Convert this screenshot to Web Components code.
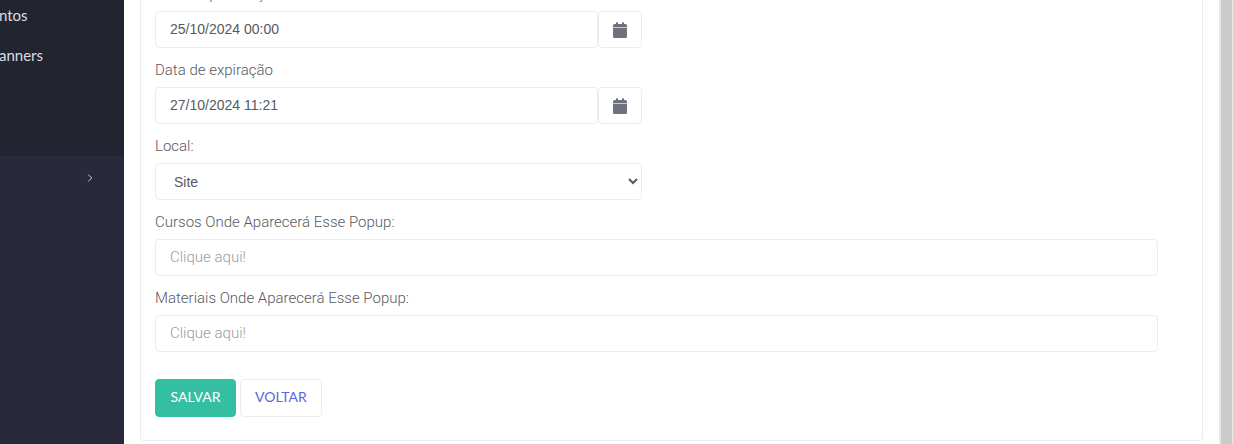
<!DOCTYPE html>
<html lang="pt-BR">
<head>
<meta charset="utf-8">
<title>Popup</title>
<style>
    body {
        margin: 0;
        background: #fff;
        color: #575962;
        font: 14px/20px "Liberation Sans", Arial, sans-serif;
        --line: #ebedf2;
        --light: Roboto, "Liberation Sans", sans-serif;
        --title: Lato, "Open Sans", sans-serif;
    }
</style>
</head>
<body>
<popup-page>
    <side-menu slot="menu">
        <menu-link>ntos</menu-link>
        <menu-link>anners</menu-link>
    </side-menu>
    <popup-form></popup-form>
</popup-page>
<script>
class PopupPage extends HTMLElement {
    constructor() {
        super();
        this.attachShadow({ mode: 'open' });
        this.shadowRoot.innerHTML = `
            <style>
                :host {
                    display: flex;
                    height: 100vh;
                    overflow: hidden;
                }
                main {
                    flex: 1;
                    min-width: 0;
                    padding: 0 16px;
                }
                .track {
                    flex: none;
                    width: 11px;
                    background: #cbcbcb;
                    border-left: 2px solid #e9e9e9;
                    border-right: 1px solid #e9e9e9;
                }
            </style>
            <slot name="menu"></slot>
            <main><slot></slot></main>
            <div class="track"></div>
        `;
    }
}

class SideMenu extends HTMLElement {
    constructor() {
        super();
        this.attachShadow({ mode: 'open' });
        this.shadowRoot.innerHTML = `
            <style>
                :host {
                    display: flex;
                    flex-direction: column;
                    flex: none;
                    width: 124px;
                    background: #282a3c;
                    overflow: hidden;
                }
                nav {
                    padding: 0 0 76px;
                    background: #222430;
                }
                .group {
                    display: flex;
                    justify-content: flex-end;
                    align-items: center;
                    height: 44px;
                    padding: 0 31px;
                    border: 0;
                    background: none;
                    color: #d0d1da;
                }
                .group svg {
                    display: block;
                }
            </style>
            <nav><slot></slot></nav>
            <button class="group" type="button" aria-label="Expandir">
                <svg width="6" height="8" viewBox="0 0 6 8" fill="none" stroke="currentColor"><path d="M1.2.5 4.7 4 1.2 7.5"/></svg>
            </button>
        `;
    }
}

class MenuLink extends HTMLElement {
    constructor() {
        super();
        this.attachShadow({ mode: 'open' });
        this.shadowRoot.innerHTML = `
            <style>
                :host {
                    display: block;
                }
                a {
                    display: block;
                    margin-left: -1px;
                    padding: 5px 0 15px;
                    color: #dddde3;
                    font: 15px/20px var(--title);
                    text-decoration: none;
                }
            </style>
            <a href="#"><slot></slot></a>
        `;
    }
}

// label + control; type is date, select or text
class FormField extends HTMLElement {
    connectedCallback() {
        const type = this.getAttribute('type');
        const value = this.getAttribute('value') || '';
        let control = `<input id="control" type="text" placeholder="Clique aqui!">`;
        if (type === 'date') {
            control = `
                <input id="control" type="text" value="${value}">
                <button type="button" aria-label="Abrir calendário">
                    <svg width="14" height="16" viewBox="0 0 14 16"><g fill="#6f727d"><path d="M3 .8Q3 .3 3.5.3h1q.5 0 .5.5V2h4V.8Q9 .3 9.5.3h1q.5 0 .5.5V2h1.5Q14 2 14 3.5V5H0V3.5Q0 2 1.5 2H3z"/><path d="M0 6h14v8.5Q14 16 12.5 16h-11Q0 16 0 14.5z"/></g><path d="M0 5h14v1H0z" fill="#c9cace"/></svg>
                </button>`;
        }
        if (type === 'select') {
            control = `<select id="control"><option>${value}</option></select>`;
        }
        this.attachShadow({ mode: 'open' });
        this.shadowRoot.innerHTML = `
            <style>
                :host {
                    display: block;
                }
                label {
                    display: block;
                    margin-bottom: 7px;
                    font: 300 15px/20px var(--light);
                }
                .row {
                    display: flex;
                    height: 37px;
                }
                input, select, button {
                    box-sizing: border-box;
                    border: 1px solid var(--line);
                    border-radius: 4px;
                    background: #fff;
                    color: #575962;
                    font: inherit;
                }
                input, select {
                    flex: 1;
                    min-width: 0;
                    padding: 0 14px;
                }
                input {
                    padding-bottom: 2px;
                }
                select {
                    padding-right: 0;
                }
                input::placeholder {
                    color: #9a9ba5;
                    font: 300 15px/20px var(--light);
                }
                button {
                    display: flex;
                    align-items: center;
                    justify-content: center;
                    width: 44px;
                    padding: 0;
                }
            </style>
            <label for="control">${this.getAttribute('label')}</label>
            <div class="row">${control}</div>
        `;
    }
}

class PopupForm extends HTMLElement {
    constructor() {
        super();
        this.attachShadow({ mode: 'open' });
        this.shadowRoot.innerHTML = `
            <style>
                :host {
                    display: block;
                    margin-top: -16px;
                }
                form {
                    display: grid;
                    grid-template-columns: 1fr 1fr;
                    gap: 12px 29px;
                    padding: 0 44px 23px 14px;
                    border: 1px solid var(--line);
                    border-top: 0;
                    border-radius: 0 0 4px 4px;
                }
                .half {
                    grid-column: 1;
                }
                .full {
                    grid-column: 1 / -1;
                }
                .actions {
                    display: flex;
                    gap: 4px;
                    padding-top: 15px;
                }
                button {
                    min-width: 81px;
                    height: 38px;
                    padding: 0 14px 2px;
                    border: 1px solid var(--line);
                    border-radius: 4px;
                    background: #fff;
                    color: #5867dd;
                    font: 14px/20px var(--title);
                }
                .save {
                    border-color: #34bfa3;
                    background: #34bfa3;
                    color: #fff;
                }
            </style>
            <form>
                <form-field class="half" type="date" label="Data de publicação" value="25/10/2024 00:00"></form-field>
                <form-field class="half" type="date" label="Data de expiração" value="27/10/2024 11:21"></form-field>
                <form-field class="half" type="select" label="Local:" value="Site"></form-field>
                <form-field class="full" type="text" label="Cursos Onde Aparecerá Esse Popup:"></form-field>
                <form-field class="full" type="text" label="Materiais Onde Aparecerá Esse Popup:"></form-field>
                <div class="actions full">
                    <button class="save" type="submit">SALVAR</button>
                    <button type="button">VOLTAR</button>
                </div>
            </form>
        `;
    }
}

customElements.define('popup-page', PopupPage);
customElements.define('side-menu', SideMenu);
customElements.define('menu-link', MenuLink);
customElements.define('form-field', FormField);
customElements.define('popup-form', PopupForm);
</script>
</body>
</html>
